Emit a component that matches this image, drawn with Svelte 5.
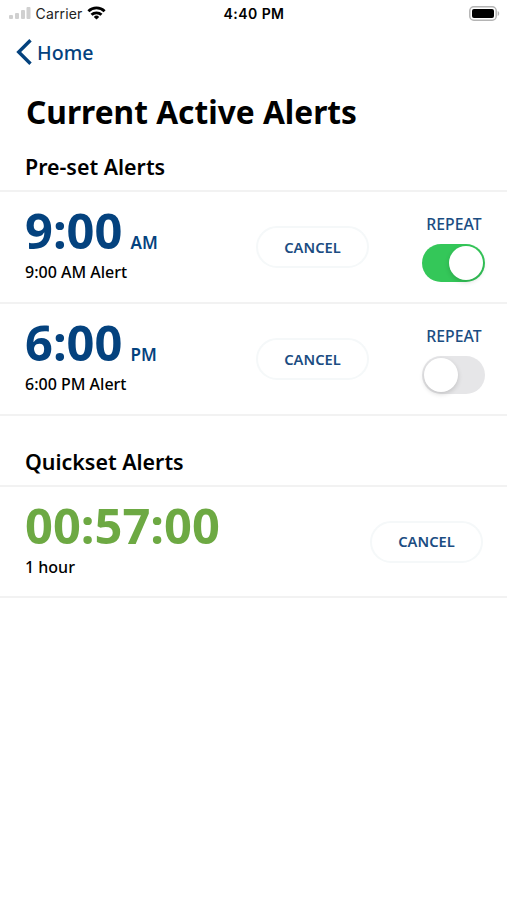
<script>
  let presets = $state([
    { time: "9:00", period: "AM", repeat: true },
    { time: "6:00", period: "PM", repeat: false }
  ]);

  const quicksets = [{ remaining: "00:57:00", label: "1 hour" }];
</script>

<div class="screen">
  <header class="status">
    <div class="carrier">
      <svg width="22" height="14" viewBox="0 0 22 14" fill="#d0d0d0">
        <rect x="0" y="9" width="4" height="4" rx="1" />
        <rect x="6" y="7" width="4" height="6" rx="1" />
        <rect x="12" y="4" width="4" height="9" rx="1" />
        <rect x="17.5" y="1" width="4" height="12" rx="1" />
      </svg>
      <span>Carrier</span>
      <svg width="19" height="14" viewBox="0 0 18 14" fill="none" stroke="#000" stroke-width="2.8">
        <path d="M.9 5.2a11.5 11.5 0 0 1 16.2 0" />
        <path d="M4 8.8a7.2 7.2 0 0 1 10 0" />
        <path d="M9 13.6 6.3 10.9a3.9 3.9 0 0 1 5.4 0z" fill="#000" stroke="none" />
      </svg>
    </div>
    <div class="clock">4:40 PM</div>
    <svg class="battery" width="31" height="15" viewBox="0 0 31 15">
      <rect x=".8" y=".8" width="26.4" height="13.4" rx="4" fill="#fff" stroke="#b4b4b4" stroke-width="1.5" />
      <rect x="3" y="3" width="22" height="9" rx="2" />
      <path d="M28.7 5v5c2-.9 2-4.1 0-5z" fill="#b4b4b4" />
    </svg>
  </header>

  <nav>
    <a href="#/home">
      <svg width="16" height="26" viewBox="0 0 16 26" fill="none" stroke="currentColor" stroke-width="3.4">
        <path d="M14.5 1.2 2.7 13l11.8 11.8" />
      </svg>
      Home
    </a>
  </nav>

  <h1>Current Active Alerts</h1>

  <h2>Pre-set Alerts</h2>
  <ul>
    {#each presets as alert}
      <li>
        <div class="info">
          <div class="time">{alert.time}<small>{alert.period}</small></div>
          <p>{alert.time} {alert.period} Alert</p>
        </div>
        <button class="cancel">CANCEL</button>
        <div class="repeat">
          <span>REPEAT</span>
          <button
            class="switch"
            class:on={alert.repeat}
            aria-label="Repeat"
            onclick={() => (alert.repeat = !alert.repeat)}
          >
            <i></i>
          </button>
        </div>
      </li>
    {/each}
  </ul>

  <h2 class="quick">Quickset Alerts</h2>
  <ul>
    {#each quicksets as { remaining, label }}
      <li class="countdown">
        <div class="info">
          <div class="time running">{remaining}</div>
          <p>{label}</p>
        </div>
        <button class="cancel">CANCEL</button>
      </li>
    {/each}
  </ul>
</div>

<style>
  :global(body) {
    margin: 0;
    background: #fff;
  }
  .screen {
    min-height: 900px;
    color: #000;
    font-family: "Noto Sans", sans-serif;
  }
  .status {
    display: grid;
    grid-template-columns: 1fr auto 1fr;
    align-items: center;
    height: 26px;
    padding: 0 7px 0 9px;
    font-family: Inter, sans-serif;
    font-size: 14px;
  }
  .carrier {
    display: flex;
    align-items: center;
    gap: 4.5px;
    color: #222;
    letter-spacing: 0.15px;
  }
  .clock {
    margin-left: -1px;
    font-weight: 600;
    letter-spacing: 0.45px;
  }
  .battery {
    justify-self: end;
  }
  nav {
    display: flex;
    height: 52px;
    padding: 0 16px;
  }
  nav a {
    display: flex;
    align-items: center;
    gap: 5px;
    color: #04427e;
    font-size: 19.6px;
    font-weight: 500;
    text-decoration: none;
  }
  h1 {
    margin: 12px 0 0 26px;
    font-size: 31.7px;
    font-weight: 700;
    line-height: 44px;
  }
  h2 {
    height: 56px;
    margin: 0;
    padding-left: 25px;
    box-sizing: border-box;
    padding-top: 18px;
    font-size: 21.4px;
    font-weight: 600;
    line-height: 30px;
  }
  .quick {
    height: 69px;
    padding-top: 31px;
  }
  ul {
    margin: 0;
    padding: 0;
    list-style: none;
    border-top: 2px solid #f2f2f2;
  }
  li {
    display: flex;
    align-items: center;
    height: 112px;
    box-sizing: border-box;
    padding: 0 22px 0 25px;
    border-bottom: 2px solid #f2f2f2;
  }
  .countdown {
    height: 111px;
    padding-right: 24px;
  }
  .info {
    flex: 1;
    padding-bottom: 8px;
  }
  .time {
    display: flex;
    align-items: baseline;
    gap: 8px;
    height: 58px;
    color: #04427e;
    font-size: 48.8px;
    font-weight: 700;
    line-height: 57px;
  }
  .time small {
    font-size: 17px;
    font-weight: 600;
    line-height: 20px;
  }
  .running {
    color: #6da943;
  }
  p {
    margin: 0;
    font-size: 16px;
    font-weight: 500;
    line-height: 24px;
  }
  button {
    padding: 0;
    cursor: pointer;
  }
  .cancel {
    width: 113px;
    height: 42px;
    border: 2px solid #f5f8f9;
    border-radius: 21px;
    padding-bottom: 1px;
    background: #fff;
    color: #1b4d82;
    font-family: inherit;
    font-size: 14.7px;
    font-weight: 600;
  }
  .repeat {
    display: flex;
    flex-direction: column;
    align-items: center;
    gap: 9px;
    width: 63px;
    margin-left: 53px;
    padding-top: 1px;
    color: #1b4d82;
    font-size: 15.8px;
    font-weight: 500;
    line-height: 22px;
  }
  .repeat span {
    padding-left: 1px;
  }
  .switch {
    display: flex;
    align-items: center;
    width: 63px;
    height: 38px;
    border: 0;
    border-radius: 19px;
    padding: 0 2px;
    background: #e6e6e8;
  }
  .switch i {
    width: 34px;
    height: 34px;
    border-radius: 50%;
    background: #fff;
    box-shadow: 0 2px 5px rgba(0, 0, 0, 0.16);
  }
  .on {
    justify-content: flex-end;
    background: #34c759;
  }
</style>
